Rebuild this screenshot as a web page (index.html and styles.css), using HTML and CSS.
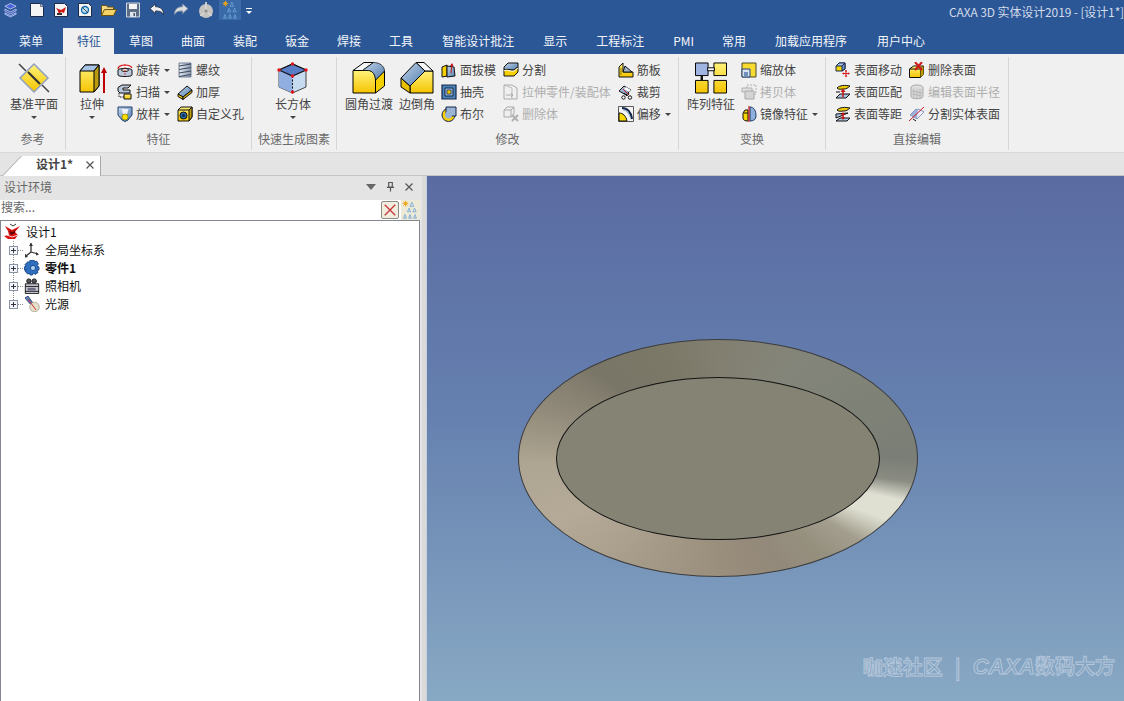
FILE: index.html
```html
<!DOCTYPE html>
<html lang="zh-CN">
<head>
<meta charset="utf-8">
<title>CAXA 3D 实体设计2019</title>
<link rel="stylesheet" href="styles.css">
</head>
<body>
<svg class="defs" xmlns="http://www.w3.org/2000/svg">
  <defs>
    <linearGradient id="yel" x1="0" y1="0" x2="0" y2="1"><stop offset="0" stop-color="#fff27a"/><stop offset="1" stop-color="#f5c400"/></linearGradient>
    <linearGradient id="blu" x1="0" y1="0" x2="1" y2="1"><stop offset="0" stop-color="#c5d6ea"/><stop offset="1" stop-color="#4f7cae"/></linearGradient>
    <linearGradient id="gry" x1="0" y1="0" x2="1" y2="0"><stop offset="0" stop-color="#e6edf5"/><stop offset="1" stop-color="#8b9aae"/></linearGradient>
  </defs>
  <symbol id="q-logo" viewBox="0 0 16 16"><path d="M8 1l6 3-6 3-6-3z" fill="#4a63d8" stroke="#e8ecff" stroke-width=".7"/><path d="M2 7l6 3 6-3v2l-6 3-6-3z" fill="#3a4fc4" stroke="#e8ecff" stroke-width=".7"/><path d="M2 11l6 3 6-3v1.500L8 15.500 2 12.500z" fill="#5a78e8" stroke="#e8ecff" stroke-width=".6"/></symbol>
  <symbol id="q-new" viewBox="0 0 16 16"><path d="M1.500 1.500h10l3 3v10h-13z" fill="#f4f4f4" stroke="#1c2b4a"/><path d="M11.500 1.500v3h3" fill="#cfd6e0" stroke="#1c2b4a" stroke-width=".6"/></symbol>
  <symbol id="q-open3d" viewBox="0 0 16 16"><path d="M1.500 1.500h10l3 3v10h-13z" fill="#f4f4f4" stroke="#1c2b4a"/><path d="M3 6l5 2 5-3-2 6-3-1-2 3-1-4z" fill="#d01818"/><path d="M4 11h5v2H4z" fill="#333"/></symbol>
  <symbol id="q-doc2" viewBox="0 0 16 16"><path d="M1.500 1.500h10l3 3v10h-13z" fill="#f4f4f4" stroke="#1c2b4a"/><circle cx="8" cy="8" r="3.500" fill="#bfe0f2" stroke="#1470b4" stroke-width="1.400"/><path d="M5 5l6 6" stroke="#222" stroke-width=".8"/></symbol>
  <symbol id="q-open" viewBox="0 0 16 16"><path d="M.500 13.500v-10h5l1 1.500h6v2" fill="#f2d98a" stroke="#6a5410"/><path d="M.500 13.500l3-6h12l-3 6z" fill="#f4d268" stroke="#6a5410"/></symbol>
  <symbol id="q-save" viewBox="0 0 16 16"><path d="M1.500 1h13v14h-13z" fill="#5e6d86" stroke="#eef1f6" stroke-width=".8"/><path d="M4 2h8v5H4z" fill="#f4f4f4"/><path d="M5 10h6v5H5z" fill="#dfe4ec"/><path d="M8.500 11h1.500v3H8.500z" fill="#46536a"/></symbol>
  <symbol id="q-undo" viewBox="0 0 17 16"><path d="M1 6.500L7 1.500v3c5 0 8.500 2.500 8.500 8.500-1.500-3-4-4-8.500-4v3z" fill="#f0f0f0" stroke="#28364e"/></symbol>
  <symbol id="q-redo" viewBox="0 0 17 16"><path d="M16 6.500L10 1.500v3C5 4.500 1.500 7 1.500 13c1.500-3 4-4 8.500-4v3z" fill="#dcdcdc" stroke="#7488a8"/></symbol>
  <symbol id="q-ball" viewBox="0 0 18 18"><path d="M9 1v2" stroke="#c8c8c8" stroke-width="2"/><circle cx="9" cy="10" r="7" fill="#c6c4c0"/><circle cx="9" cy="10" r="1.500" fill="#909090"/><path d="M3 15l4-3M15 15l-4-3M9 3v5" stroke="#e4e4e4"/></symbol>
  <symbol id="tree" viewBox="0 0 18 22"><path d="M4 1v6M1 4h6M2 2l4 4M6 2L2 6" stroke="#eda614" stroke-width="1.100"/><g fill="none" stroke="#6ea6d8" stroke-width=".9"><path d="M11 2.500L9 7h4zM8 9l-1.800 4h3.600zM14 9l-1.800 4h3.600z"/><path d="M3.500 16l-1.500 4h3zM9 16l-1.500 4h3zM14.500 16l-1.500 4h3z"/></g></symbol>

  <symbol id="plane" viewBox="0 0 32 32"><path d="M1 2l7 7M24 23l7 7" stroke="#444" stroke-width="1.500"/><path d="M16 2l14 14-14 14L2 16z" fill="url(#yel)" stroke="#8fa0c0" stroke-width="1.500"/><path d="M10 10l12 12" stroke="#333" stroke-width="2.200"/></symbol>
  <symbol id="extrude" viewBox="-2 0 32 32"><path d="M2 9l5-6h14v21l-5 6H2z" fill="url(#yel)" stroke="#000"/><path d="M2 9h14l5-6H7z" fill="#a9c3e2" stroke="#000"/><path d="M16 9v21l5-6V3z" fill="#b99c10" stroke="#000"/><path d="M26 31V9" stroke="#c00000" stroke-width="2"/><path d="M23 11l3-6 3 6z" fill="#c00000"/></symbol>
  <symbol id="box" viewBox="0 0 32 32"><path d="M15.500 2L29 8v17l-13.500 6L2 25V8z" fill="#c6daf0" stroke="#444"/><path d="M2 8l13.500 6v17L2 25z" fill="#90aee0"/><path d="M2 8l13.500 6L29 8l-13.500-6z" fill="#5a7dc8" stroke="#111" stroke-width="1.200"/><path d="M15.500 14v17" stroke="#111" stroke-dasharray="2 1.500"/><g fill="#e8141c"><circle cx="2" cy="8" r="1.700"/><circle cx="15.500" cy="2" r="1.700"/><circle cx="29" cy="8" r="1.700"/><circle cx="15.500" cy="14" r="1.700"/><circle cx="15.500" cy="30" r="1.700"/></g></symbol>
  <symbol id="fillet" viewBox="0 0 33 32"><path d="M.500 8.500H16C20 8.500 23 13 23 18V31H.500z" fill="url(#yel)" stroke="#000"/><path d="M23 18L32 9V24L23 31z" fill="#f4d000" stroke="#000"/><path d="M.500 8.500L11.500.500H21L10 8.500z" fill="#f6f6f6" stroke="#000"/><path d="M10 8.500L21 .500C27 .500 32 4 32 9L23 18C23 13 20 8.500 16 8.500z" fill="url(#blu)" stroke="#000" stroke-width=".7"/></symbol>
  <symbol id="chamfer" viewBox="0 0 34 32"><path d="M10 24L25 9h8V31H10z" fill="url(#yel)" stroke="#000"/><path d="M1 16l9 8v7l-9-6z" fill="#e8c000" stroke="#000"/><path d="M16 .500h8L33 9h-8z" fill="#f6f6f6" stroke="#000"/><path d="M1 16L16 .500 25 9 10 24z" fill="url(#blu)" stroke="#000"/></symbol>
  <symbol id="pattern" viewBox="0 0 33 32"><g stroke="#000"><path d="M.500.500h13v13H.500z" fill="#9fb4e0"/><path d="M19.500.500h13v13h-13zM.500 18.500h13v13H.500zM19.500 18.500h13v13h-13z" fill="url(#yel)"/></g><path d="M13 5.500h7v3h-7z" fill="#fff" stroke="#000"/><path d="M7 13v6" stroke="#111" stroke-width="2.500"/></symbol>

  <symbol id="rotate" viewBox="0 0 16 16"><path d="M1 7c0-3 4-4 7-4s6 1 7 3" fill="none" stroke="#d81818" stroke-width="1.200"/><path d="M1 8c0-2 14-2 14 0v5c0 2-14 2-14 0z" fill="#bcc9dc" stroke="#111"/><ellipse cx="8" cy="8" rx="3.500" ry="1.500" fill="#f0f0f0" stroke="#111"/><path d="M8 2v12" stroke="#d81818" stroke-dasharray="2 1" stroke-width=".8"/></symbol>
  <symbol id="sweep" viewBox="0 0 16 16"><path d="M1 3.500L5 1h9l-3 3H6v2h7v3H3L1 7z" fill="#b9c8dd" stroke="#111"/><path d="M7 10h7v5H7z" fill="url(#yel)" stroke="#111"/><path d="M2 9v4h5" fill="none" stroke="#111" stroke-dasharray="1.500 1"/></symbol>
  <symbol id="loft" viewBox="0 0 16 16"><path d="M1 1h14v8l-4 5-3 1.500L5 14 1 9z" fill="url(#blu)" stroke="#1c3d6c"/><path d="M4.500 3h7l-1.500 5h-4z" fill="#eef2f8"/><circle cx="8" cy="11" r="3" fill="#fce000" stroke="#8a7800" stroke-width=".7"/></symbol>
  <symbol id="thread" viewBox="0 0 16 16"><path d="M2 1h12v14H2z" fill="url(#gry)" stroke="#596a84" stroke-width=".8"/><path d="M2 4l12-2M2 7.500l12-2M2 11l12-2M2 14.500l12-2" stroke="#39465c" fill="none"/></symbol>
  <symbol id="thicken" viewBox="0 0 16 16"><path d="M1 10l9-8 5 4-9 7z" fill="url(#blu)" stroke="#111"/><path d="M1 10l5 3v2.500L1 12.500z" fill="#f0c800" stroke="#111"/><path d="M6 13l9-7v2.500l-9 7z" fill="#d8b000" stroke="#111"/></symbol>
  <symbol id="hole" viewBox="0 0 16 16"><path d="M1 4l3-3h11v10l-3 4H1z" fill="url(#yel)" stroke="#111"/><path d="M12 4v11l3-4V1z" fill="#c09c00" stroke="#111"/><path d="M1 4h11l3-3" fill="none" stroke="#111"/><circle cx="6.500" cy="9.500" r="3.500" fill="#2c6aa8" stroke="#111"/><circle cx="6.500" cy="9.500" r="1.500" fill="#0c2c54"/></symbol>
  <symbol id="draft" viewBox="0 0 16 16"><path d="M1 5l5-2v11l-5 1z" fill="#f8d000" stroke="#111"/><path d="M6 4l7 1 1 9-8 1z" fill="url(#blu)" stroke="#111"/><path d="M10 11L11 2" stroke="#c81818"/><path d="M9 4l2-3 1.500 3z" fill="#c81818"/></symbol>
  <symbol id="shell" viewBox="0 0 16 16"><path d="M1 1h14v14H1z" fill="#4b82b8" stroke="#16264a" stroke-width="1.200"/><path d="M4 4h8v8H4z" fill="#99bbdc" stroke="#16264a"/><path d="M6 6h4v4H6z" fill="#f0c800" stroke="#16264a" stroke-width=".7"/></symbol>
  <symbol id="bool" viewBox="0 0 16 16"><circle cx="7.500" cy="9" r="6.500" fill="#f8d000" stroke="#16264a"/><path d="M5 1h10v9H9l-4-2z" fill="#99b4d4" stroke="#16264a"/><circle cx="7.500" cy="9" r="3.500" fill="#99b4d4"/></symbol>
  <symbol id="split" viewBox="0 0 16 16"><path d="M1 5l4-4h10v4l-4 3H1z" fill="url(#blu)" stroke="#111"/><path d="M1 8c3-2 7 1 10 0l4-3v5l-4 4H1z" fill="#f8d000" stroke="#111"/><path d="M1 9c3-2 7 1 10 0l4-3" fill="none" stroke="#fff"/></symbol>
  <symbol id="dis-ext" viewBox="0 0 16 16"><path d="M1 1h8l5 3v11H1z" fill="#f0f0f0" stroke="#aaa"/><path d="M1 1l8 3v11" fill="none" stroke="#bbb"/><path d="M3 11h7M8 9l2 2-2 2" stroke="#aaa" fill="none"/></symbol>
  <symbol id="dis-del" viewBox="0 0 16 16"><path d="M1 4l3-3h7v7l-3 3H1z" fill="#efefef" stroke="#aaa"/><path d="M1 4h7v7M8 4l3-3" fill="none" stroke="#aaa"/><path d="M9 9l6 6M15 9l-6 6" stroke="#b0b0b0" stroke-width="2"/></symbol>
  <symbol id="rib" viewBox="0 0 16 16"><path d="M1 15V5l4-4v9h10v5z" fill="url(#yel)" stroke="#111"/><path d="M5 10l2-6 7 6z" fill="#9db2cc" stroke="#111"/><path d="M3 13V6" stroke="#8a7400"/></symbol>
  <symbol id="trim" viewBox="0 0 16 16"><path d="M1 7l5-5 7 4-5 5z" fill="url(#blu)" stroke="#111"/><path d="M8 3l5 3-2 2-5-3z" fill="#fff"/><path d="M5 5l6 6" stroke="#d01818"/><path d="M6 9l3 3M11 9l-2 3" stroke="#111"/><circle cx="5.500" cy="13.500" r="1.700" fill="#fff" stroke="#111"/><circle cx="12" cy="13.500" r="1.700" fill="#fff" stroke="#111"/></symbol>
  <symbol id="offset" viewBox="0 0 16 16"><path d="M.500.500h15v15H.500z" fill="#f4f4f4" stroke="#5a5a5a"/><path d="M1 15V7c4 0 7 3 8 8z" fill="#f8d800" stroke="#111"/><path d="M4 2c5 0 9 4 10 11" fill="none" stroke="#16264a" stroke-width="2.200"/><path d="M5 4c3 0 6 3 7 7" fill="none" stroke="#7ea2c8"/></symbol>
  <symbol id="scale" viewBox="0 0 16 16"><path d="M1 1h14v14H1z" fill="#f8da30" stroke="#4a4a30"/><path d="M1 7h8v8H1z" fill="#d8e2f0" stroke="#27436e"/><path d="M3 10h4v5H3z" fill="#6f90b8"/></symbol>
  <symbol id="dis-copy" viewBox="0 0 16 16"><path d="M6 1h9v9H6z" fill="#f0f0f0" stroke="#b0b0b0" stroke-dasharray="2 1"/><path d="M1 4h10v4H1z" fill="#e0e0e0" stroke="#b0b0b0"/><path d="M4 7h9v8H4z" fill="#d4d4d4" stroke="#a8a8a8"/></symbol>
  <symbol id="mirror" viewBox="0 0 16 16"><path d="M7 4H4L2 7v5c0 2 2 3 5 3z" fill="#f8d800" stroke="#111"/><path d="M3 7h4" stroke="#111"/><path d="M9 1c4 0 6 4 6 9 0 3-2 5-6 5z" fill="#90b0dc" stroke="#1c3d6c"/><path d="M8 0v16" stroke="#d01818" stroke-width="1.200"/></symbol>
  <symbol id="s-move" viewBox="0 0 16 16"><path d="M1 4l3-3h6v6l-3 2H1z" fill="#f8d800" stroke="#16264a"/><path d="M4 1l6 0-3 3H1z" fill="#a8c4e8" stroke="#16264a"/><path d="M7 4v5l3-2V1z" fill="#6f93c8" stroke="#16264a"/><path d="M11 8v7M7.500 11.500h7" stroke="#d01818"/><path d="M9.800 9.500L11 7.800l1.200 1.700zM9.800 13.500L11 15.200l1.200-1.700zM9 10.300l-1.700 1.200L9 12.700zM13 10.300l1.700 1.200L13 12.700z" fill="#d01818"/></symbol>
  <symbol id="s-match" viewBox="0 0 16 16"><path d="M2 4c3-3 8-3 13-2-2 2-4 3-6 3-3 0-5 1-7-1z" fill="#f0c800" stroke="#111"/><path d="M1 14l4-4h10l-4 4z" fill="#a9c3e2" stroke="#111"/><path d="M8 13V6" stroke="#c81818" stroke-width="1.500"/><path d="M5.500 8L8 4.500 10.500 8z" fill="#c81818"/><path d="M1 8h4" stroke="#111"/></symbol>
  <symbol id="s-offset" viewBox="0 0 16 16"><path d="M2 4c3-3 8-3 13-2-2 2-4 3-6 3-3 0-5 1-7-1z" fill="#f0c800" stroke="#111"/><path d="M1 8l12-1-12 5zM1 15l4-3h10l-3 3z" fill="#a9c3e2" stroke="#111"/><path d="M8 13V7" stroke="#c81818" stroke-width="1.500"/><path d="M6 11l2 3 2-3zM6 9l2-3 2 3z" fill="#c81818"/></symbol>
  <symbol id="s-del" viewBox="0 0 16 16"><path d="M.500 7l4-3h10v8l-3 3.500H.500z" fill="url(#yel)" stroke="#111"/><path d="M.500 7h11v8.500M11.500 7l3-3" fill="none" stroke="#111"/><path d="M11.500 7v8.500l3-3.500V4z" fill="#c09c00"/><path d="M6 0l7 8M13 0L6 8" stroke="#d01818" stroke-width="2"/></symbol>
  <symbol id="dis-rad" viewBox="0 0 16 16"><ellipse cx="8" cy="3.500" rx="6" ry="2.500" fill="#e0e0e0" stroke="#a8a8a8"/><path d="M2 3.500v9c0 3 12 3 12 0v-9" fill="#d8d8d8" stroke="#a8a8a8"/><path d="M3 7l10 2M3 10l10 2M5 5v9M8 6v9M11 5v9" stroke="#b8b8b8"/></symbol>
  <symbol id="s-split" viewBox="0 0 16 16"><path d="M1 9l6-6 8 3-7 7z" fill="#9cb0dc" stroke="#8c9cc4"/><path d="M9 3l6 3-7 7" fill="#eef" stroke="#8c9cc4"/><path d="M0 15L15 1" stroke="#d01818"/><path d="M4 13l3 2" stroke="#111"/></symbol>

  <symbol id="t-root" viewBox="0 0 18 18"><path d="M1 3l7 4 8-4-5 6 3 3-3 4-7 0-4-3 5-1-1-4z" fill="#d81010"/><path d="M5 8l4 1 2-2v3l-4 2z" fill="#600"/><path d="M6 1l3 2 3-2" fill="none" stroke="#333"/><path d="M3 12l5 2 6-2" fill="none" stroke="#fff" stroke-width=".8"/></symbol>
  <symbol id="t-axis" viewBox="0 0 16 16"><path d="M7 1v9M7 10l7 2M7 10l-5 4" stroke="#333" stroke-width="1.300" fill="none"/><path d="M5 4l2-3 2 3zM12 10l3 2.500-3 1zM1 11.500L1 15.500l3-.5z" fill="#333"/></symbol>
  <symbol id="t-part" viewBox="0 0 16 16"><path d="M6 0h4l.500 2 2-1 2 3-1.500 1.500 2 1.500v3l-2 .500 1 2-3 2-1.500-1.500-1 2H6l-.500-2-2 1-2.500-3 1.500-1L0 10V7l2-.500-1-2 3-3 1.500 1.500z" fill="#2e6fc0" stroke="#123a78" stroke-width=".8"/><circle cx="9" cy="8" r="2.600" fill="#a8d0f4" stroke="#123a78" stroke-width=".8"/></symbol>
  <symbol id="t-cam" viewBox="0 0 16 18"><circle cx="4.500" cy="3.500" r="2.500" fill="#555" stroke="#111"/><circle cx="10.500" cy="3.500" r="2.500" fill="#555" stroke="#111"/><path d="M.500 6.500h15v11H.500z" fill="#c8c8d4" stroke="#111"/><path d="M.500 9.500h15M.500 15h15" stroke="#111"/><path d="M3 11h9v3H3z" fill="#6a6a84"/></symbol>
  <symbol id="t-light" viewBox="0 0 16 16"><path d="M1 2l3-2 5 7-2 2z" fill="#5a86c8" stroke="#16264a" stroke-width=".7"/><circle cx="10.500" cy="11" r="4.800" fill="#e4e0cc" stroke="#9c9880" stroke-width=".7"/><path d="M4 3l8 11" stroke="#d02020" stroke-width=".9"/></symbol>
  <symbol id="x-mark" viewBox="0 0 8 8"><path d="M.500.500l7 7M7.500.500l-7 7" stroke="#555" stroke-width="1.200"/></symbol>
</svg>

<header class="titlebar">
  <div class="qa">
    <svg class="qi qi-logo"><use href="#q-logo"/></svg>
    <svg class="qi qi-a"><use href="#q-new"/></svg>
    <svg class="qi"><use href="#q-open3d"/></svg>
    <svg class="qi"><use href="#q-doc2"/></svg>
    <svg class="qi"><use href="#q-open"/></svg>
    <svg class="qi"><use href="#q-save"/></svg>
    <svg class="qi"><use href="#q-undo"/></svg>
    <svg class="qi"><use href="#q-redo"/></svg>
    <svg class="qi qi-ball"><use href="#q-ball"/></svg>
    <span class="qa-hot"><svg class="qi-tree"><use href="#tree"/></svg></span>
    <span class="qa-more"></span>
  </div>
  <div class="title">CAXA 3D 实体设计2019 - [设计1*]</div>
</header>

<nav class="tabs">
  <span class="tab tab-menu">菜单</span>
  <span class="tab active">特征</span>
  <span class="tab">草图</span>
  <span class="tab">曲面</span>
  <span class="tab">装配</span>
  <span class="tab">钣金</span>
  <span class="tab">焊接</span>
  <span class="tab">工具</span>
  <span class="tab tab-wide">智能设计批注</span>
  <span class="tab">显示</span>
  <span class="tab tab-wide">工程标注</span>
  <span class="tab">PMI</span>
  <span class="tab">常用</span>
  <span class="tab tab-wide">加载应用程序</span>
  <span class="tab tab-wide">用户中心</span>
</nav>

<section class="ribbon">
  <div class="group g1">
    <div class="body">
      <div class="big w48"><svg class="bi"><use href="#plane"/></svg><span>基准平面</span><i class="caret"></i></div>
    </div>
    <div class="glabel">参考</div>
  </div>
  <div class="group g2">
    <div class="body">
      <div class="big w32"><svg class="bi"><use href="#extrude"/></svg><span>拉伸</span><i class="caret"></i></div>
      <div class="col">
        <div class="row"><svg class="si"><use href="#rotate"/></svg><span>旋转</span><i class="caret side"></i></div>
        <div class="row"><svg class="si"><use href="#sweep"/></svg><span>扫描</span><i class="caret side"></i></div>
        <div class="row"><svg class="si"><use href="#loft"/></svg><span>放样</span><i class="caret side"></i></div>
      </div>
      <div class="col">
        <div class="row"><svg class="si"><use href="#thread"/></svg><span>螺纹</span></div>
        <div class="row"><svg class="si"><use href="#thicken"/></svg><span>加厚</span></div>
        <div class="row"><svg class="si"><use href="#hole"/></svg><span>自定义孔</span></div>
      </div>
    </div>
    <div class="glabel">特征</div>
  </div>
  <div class="group g3">
    <div class="body">
      <div class="big w60"><svg class="bi"><use href="#box"/></svg><span>长方体</span><i class="caret"></i></div>
    </div>
    <div class="glabel">快速生成图素</div>
  </div>
  <div class="group g4">
    <div class="body">
      <div class="big w48"><svg class="bi bi-wide"><use href="#fillet"/></svg><span>圆角过渡</span></div>
      <div class="big w36"><svg class="bi bi-wide"><use href="#chamfer"/></svg><span>边倒角</span></div>
      <div class="col">
        <div class="row"><svg class="si"><use href="#draft"/></svg><span>面拔模</span></div>
        <div class="row"><svg class="si"><use href="#shell"/></svg><span>抽壳</span></div>
        <div class="row"><svg class="si"><use href="#bool"/></svg><span>布尔</span></div>
      </div>
      <div class="col">
        <div class="row"><svg class="si"><use href="#split"/></svg><span>分割</span></div>
        <div class="row off"><svg class="si"><use href="#dis-ext"/></svg><span>拉伸零件/装配体</span></div>
        <div class="row off"><svg class="si"><use href="#dis-del"/></svg><span>删除体</span></div>
      </div>
      <div class="col">
        <div class="row"><svg class="si"><use href="#rib"/></svg><span>筋板</span></div>
        <div class="row"><svg class="si"><use href="#trim"/></svg><span>裁剪</span></div>
        <div class="row"><svg class="si"><use href="#offset"/></svg><span>偏移</span><i class="caret side"></i></div>
      </div>
    </div>
    <div class="glabel">修改</div>
  </div>
  <div class="group g5">
    <div class="body">
      <div class="big w48"><svg class="bi"><use href="#pattern"/></svg><span>阵列特征</span></div>
      <div class="col">
        <div class="row"><svg class="si"><use href="#scale"/></svg><span>缩放体</span></div>
        <div class="row off"><svg class="si"><use href="#dis-copy"/></svg><span>拷贝体</span></div>
        <div class="row"><svg class="si"><use href="#mirror"/></svg><span>镜像特征</span><i class="caret side"></i></div>
      </div>
    </div>
    <div class="glabel">变换</div>
  </div>
  <div class="group g6">
    <div class="body">
      <div class="col">
        <div class="row"><svg class="si"><use href="#s-move"/></svg><span>表面移动</span></div>
        <div class="row"><svg class="si"><use href="#s-match"/></svg><span>表面匹配</span></div>
        <div class="row"><svg class="si"><use href="#s-offset"/></svg><span>表面等距</span></div>
      </div>
      <div class="col">
        <div class="row"><svg class="si"><use href="#s-del"/></svg><span>删除表面</span></div>
        <div class="row off"><svg class="si"><use href="#dis-rad"/></svg><span>编辑表面半径</span></div>
        <div class="row"><svg class="si"><use href="#s-split"/></svg><span>分割实体表面</span></div>
      </div>
    </div>
    <div class="glabel">直接编辑</div>
  </div>
</section>

<div class="docstrip">
  <div class="doctab"><div class="doctab-in"><span class="docname">设计1*</span><svg class="docx"><use href="#x-mark"/></svg></div></div>
</div>

<main class="main">
  <aside class="panel">
    <div class="phead">
      <span>设计环境</span>
      <span class="ptools">
        <i class="pdrop"></i>
        <svg class="ppin" viewBox="0 0 10 12"><path d="M3 1h4v5H3zM1 6.500h8M5 7v4" fill="none" stroke="#555" stroke-width="1.300"/></svg>
        <svg class="px"><use href="#x-mark"/></svg>
      </span>
    </div>
    <div class="search">
      <span class="stext">搜索...</span>
      <span class="sbtn"><svg viewBox="0 0 16 16"><path d="M2 2l12 12M14 2L2 14" stroke="#c83838" stroke-width="1.600"/></svg></span>
      <span class="stree"><svg><use href="#tree"/></svg></span>
    </div>
    <div class="treebox">
      <div class="trow root"><svg class="ti-root"><use href="#t-root"/></svg><span>设计1</span></div>
      <div class="kids">
        <div class="trow"><i class="exp"></i><i class="stub"></i><svg class="ti"><use href="#t-axis"/></svg><span>全局坐标系</span></div>
        <div class="trow"><i class="exp"></i><i class="stub"></i><svg class="ti"><use href="#t-part"/></svg><b>零件1</b></div>
        <div class="trow"><i class="exp"></i><i class="stub"></i><svg class="ti"><use href="#t-cam"/></svg><span>照相机</span></div>
        <div class="trow"><i class="exp"></i><i class="stub"></i><svg class="ti"><use href="#t-light"/></svg><span>光源</span></div>
      </div>
    </div>
  </aside>
  <div class="splitter"></div>
  <section class="viewport">
    <div class="disc"><div class="face"></div></div>
    <div class="mark"><span>咖迷社区</span><span class="bar">|</span><span><em>CAXA</em>数码大方</span></div>
  </section>
</main>
</body>
</html>
```

FILE: styles.css
```css
* { box-sizing: border-box; }
html, body { margin: 0; padding: 0; }
body {
  width: 1124px;
  height: 701px;
  overflow: hidden;
  display: flex;
  flex-direction: column;
  background: #e4e4e4;
  font-family: "Noto Sans CJK SC", "Liberation Sans", sans-serif;
  font-size: 12px;
  color: #444;
}
.defs { display: block; width: 0; height: 0; flex: none; }

/* title bar */
.titlebar {
  height: 27px;
  flex: none;
  display: flex;
  background: #2b5797;
  overflow: hidden;
}
.qa {
  width: 949px;
  flex: none;
  display: flex;
  align-items: flex-start;
  padding: 2px 0 0 3px;
}
.qi { width: 16px; height: 16px; margin-right: 8px; flex: none; }
.qi-logo { width: 15px; margin-right: 11px; }
.qi-ball { width: 18px; height: 18px; margin: -1px 4px 0 0; }
.qa-hot {
  width: 22px;
  height: 20px;
  margin-top: -2px;
  background: #3a6ba8;
  display: flex;
  justify-content: center;
  align-items: center;
}
.qi-tree { width: 18px; height: 20px; }
.qa-more {
  margin: 6px 0 0 5px;
  width: 6px;
  height: 6px;
  border-top: 1px solid #fff;
}
.qa-more::after {
  content: "";
  display: block;
  margin-top: 2px;
  border: 3px solid transparent;
  border-top-color: #fff;
  border-bottom: 0;
}
.title {
  flex: none;
  color: #d3dbe8;
  line-height: 23px;
  letter-spacing: -.12px;
  white-space: nowrap;
}

/* ribbon tabs */
.tabs {
  height: 27px;
  flex: none;
  display: flex;
  background: #2b5797;
  padding-left: 5px;
}
.tab {
  padding: 0 14px;
  margin-top: 1px;
  line-height: 25px;
  color: #f4f6fa;
  white-space: nowrap;
}
.tab-wide { padding: 0 15px; }
.tab-menu { margin-right: 6px; }
.active { background: #f0f0f0; color: #2b5797; padding-right: 13px; margin-right: 1px; }

/* ribbon */
.ribbon {
  height: 99px;
  flex: none;
  display: flex;
  padding-top: 3px;
  background: #f0f0f0;
  border-bottom: 1px solid #d8d8d8;
}
.group {
  height: 93px;
  flex: none;
  display: flex;
  flex-direction: column;
  border-right: 1px solid #d6d6d6;
  padding-top: 2px;
}
.g1 { width: 66px; padding-left: 10px; }
.g2 { width: 186px; padding-left: 10px; }
.g3 { width: 85px; padding-left: 11px; }
.g4 { width: 342px; padding-left: 8px; }
.g5 { width: 147px; padding-left: 8px; }
.g6 { width: 183px; padding-left: 9px; }
.body { height: 71px; display: flex; align-items: flex-start; }
.glabel {
  height: 20px;
  line-height: 18px;
  text-align: center;
  color: #6a6a6a;
  white-space: nowrap;
}
.g1 .glabel { margin-left: -10px; }
.g2 .glabel { margin-left: -10px; }
.g3 .glabel { margin-left: -11px; }
.g4 .glabel { margin-left: -8px; }
.g5 .glabel { margin-left: -8px; }
.g6 .glabel { margin-left: -9px; }

.big {
  flex: none;
  display: flex;
  flex-direction: column;
  align-items: center;
  padding-top: 3px;
  line-height: 20px;
  white-space: nowrap;
}
.w32 { width: 32px; }
.w36 { width: 36px; }
.w48 { width: 48px; }
.w60 { width: 60px; }
.bi { width: 32px; height: 32px; flex: none; }
.bi-wide { width: 34px; }
.big + .big { margin-left: 6px; }
.big + .col { margin-left: 6px; }
.col + .col { margin-left: 7px; }
.g2 .big + .col { margin-left: 9px; }
.col { flex: none; }
.row {
  height: 22px;
  display: flex;
  align-items: center;
  white-space: nowrap;
}
.row span { margin-bottom: 2px; }
.si { width: 16px; height: 16px; margin-right: 3px; flex: none; }
.off { color: #aeaeae; }
.caret {
  display: block;
  border: 3px solid transparent;
  border-top-color: #444;
  border-bottom: 0;
  margin-top: 2px;
}
.side { margin: 0 0 0 4px; }

/* document tabs */
.docstrip {
  height: 23px;
  flex: none;
  padding: 2px 0 0 2px;
  background: #e4e4e4;
  border-bottom: 1px solid #c4c4c4;
}
.doctab {
  width: 99px;
  height: 20px;
  background: #a8a8a8;
  clip-path: polygon(0 100%, 19px 0, 100% 0, 100% 100%);
}
.doctab-in {
  width: 98px;
  height: 20px;
  margin-top: 1px;
  display: flex;
  align-items: center;
  padding: 0 0 4px 34px;
  background: #fff;
  clip-path: polygon(1px 100%, 20px 0, 100% 0, 100% 100%);
}
.docname { font-weight: 700; color: #444; line-height: 16px; }
.docx { width: 8px; height: 8px; margin: 1px 0 0 13px; }

/* main */
.main { flex: 1; display: flex; min-height: 0; }
.panel {
  width: 420px;
  flex: none;
  display: flex;
  flex-direction: column;
  background: #e4e4e4;
}
.phead {
  height: 24px;
  flex: none;
  display: flex;
  align-items: center;
  justify-content: space-between;
  padding: 0 7px 3px 4px;
  color: #666;
}
.ptools { display: flex; align-items: center; }
.pdrop {
  display: block;
  border: 5px solid transparent;
  border-top: 6px solid #666;
  border-bottom: 0;
  margin-right: 10px;
}
.ppin { width: 9px; height: 12px; margin-right: 10px; }
.px { width: 8px; height: 8px; }
.search {
  height: 20px;
  flex: none;
  display: flex;
  align-items: center;
  background: #fff;
  padding-left: 1px;
  color: #666;
}
.stext { flex: 1; line-height: 16px; margin-bottom: 6px; }
.sbtn {
  width: 18px;
  height: 18px;
  display: flex;
  align-items: center;
  justify-content: center;
  background: #f0ece0;
  border: 1px solid #8c8c80;
  border-radius: 2px;
}
.sbtn svg { width: 14px; height: 14px; }
.stree {
  width: 19px;
  height: 20px;
  margin-left: 2px;
  background: #ece9d8;
  display: flex;
}
.stree svg { width: 18px; height: 20px; }
.treebox {
  flex: 1;
  background: #fff;
  border: 1px solid #828790;
  border-bottom: 0;
  padding-top: 2px;
  color: #111;
}
.trow { height: 18px; display: flex; align-items: center; white-space: nowrap; }
.trow span, .trow b { margin-bottom: 2px; }
.root { padding-left: 3px; }
.ti-root { width: 18px; height: 18px; margin-right: 4px; }
.kids {
  background: repeating-linear-gradient(#888 0 1px, transparent 1px 2px) 12px 0 / 1px 64px no-repeat;
}
.exp {
  width: 9px;
  height: 9px;
  margin-left: 8px;
  border: 1px solid #8a94a6;
  background:
    linear-gradient(#334, #334) center / 5px 1px no-repeat,
    linear-gradient(#334, #334) center / 1px 5px no-repeat,
    #f4f6fa;
}
.stub { width: 5px; height: 0; border-top: 1px dotted #888; margin-right: 1px; }
.ti { width: 16px; height: 16px; margin-right: 5px; flex: none; }
.trow b { font-weight: 700; }

.splitter {
  width: 6px;
  flex: none;
  background: linear-gradient(90deg, #e4e4e4 0 2px, #dadada 2px);
}
.viewport {
  flex: 1;
  position: relative;
  border-left: 1px solid #c8d0dc;
  background: linear-gradient(#5a6ba2 0, #6580af 45%, #88a9c4 100%);
  overflow: hidden;
}
.disc {
  position: absolute;
  left: 91px;
  top: 163px;
  width: 400px;
  height: 238px;
  border-radius: 50%;
  border: 1px solid #3c3c3c;
  display: flex;
  align-items: center;
  justify-content: center;
  background: conic-gradient(
    #827f70 0deg, #84857a 40deg, #7e8276 70deg, #7a7e76 90deg, #8a8c82 97deg,
    #dfe0d2 103deg, #dfe0d2 110deg, #a39e8e 120deg, #96907f 132deg, #93897a 150deg, #9a8e7c 180deg,
    #a59a87 215deg, #b4aa97 250deg, #aea592 268deg, #928b7b 285deg, #7a7667 305deg, #7c7868 330deg, #827f70 360deg);
}
.face {
  width: 324px;
  height: 163px;
  border-radius: 50%;
  border: 1.500px solid #141414;
  background: #858373;
}
.mark {
  position: absolute;
  right: 9px;
  bottom: 21px;
  display: flex;
  align-items: center;
  font-size: 20px;
  font-weight: 700;
  line-height: 26px;
  color: #87a6c1;
  -webkit-text-stroke: 1px rgba(196, 210, 228, .75);
  white-space: nowrap;
}
.bar { margin: 0 12px; }
.mark em { font-family: "Liberation Sans", sans-serif; font-size: 22px; }
```
